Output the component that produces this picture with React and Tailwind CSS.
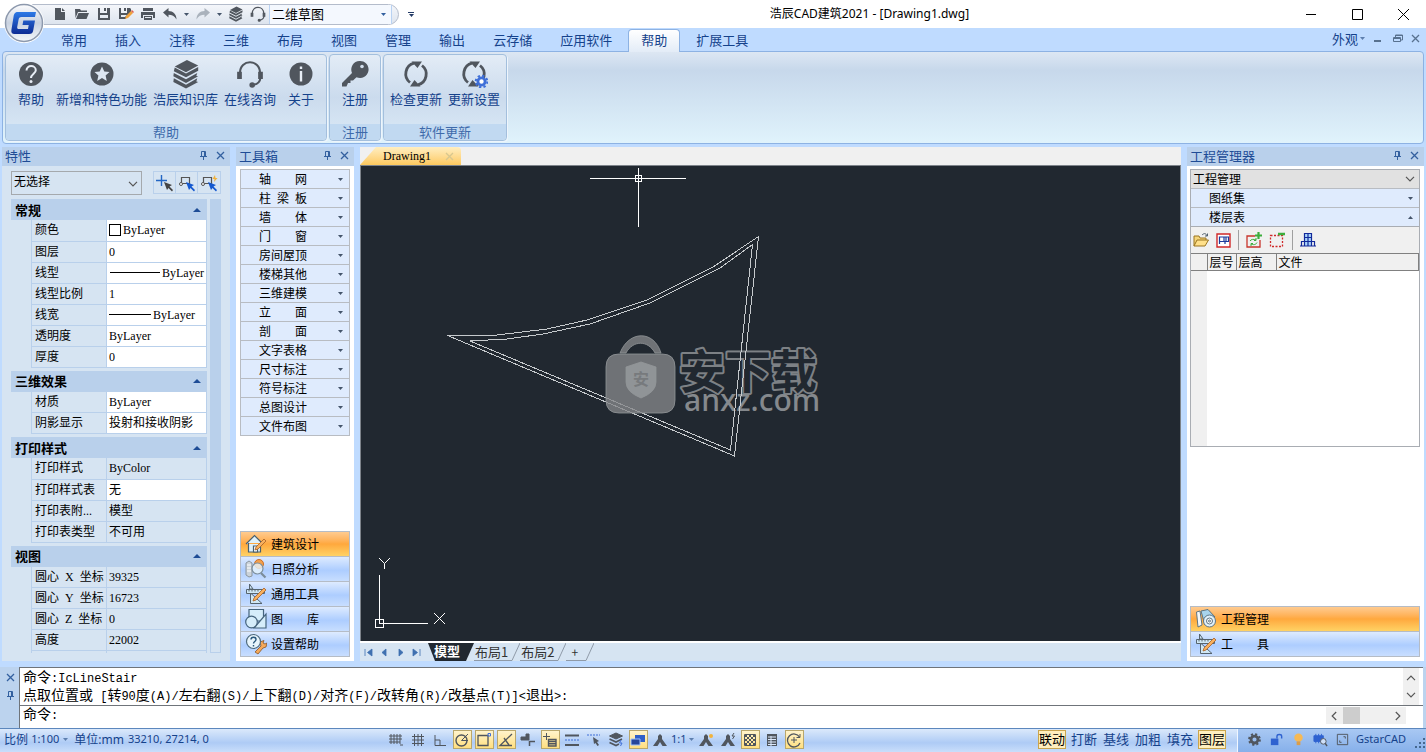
import React, { useState } from 'react';

const tabs = ['常用', '插入', '注释', '三维', '布局', '视图', '管理', '输出', '云存储', '应用软件', '帮助', '扩展工具'];

const propertyGroups = [
    {
        title: '常规',
        rows: [
            { name: '颜色', value: 'ByLayer', editable: true, mark: 'swatch' },
            { name: '图层', value: '0', editable: true },
            { name: '线型', value: 'ByLayer', editable: true, mark: 'longLine' },
            { name: '线型比例', value: '1', editable: true },
            { name: '线宽', value: 'ByLayer', editable: true, mark: 'shortLine' },
            { name: '透明度', value: 'ByLayer', editable: true },
            { name: '厚度', value: '0', editable: true },
        ],
    },
    {
        title: '三维效果',
        rows: [
            { name: '材质', value: 'ByLayer', editable: true },
            { name: '阴影显示', value: '投射和接收阴影', editable: true },
        ],
    },
    {
        title: '打印样式',
        rows: [
            { name: '打印样式', value: 'ByColor' },
            { name: '打印样式表', value: '无', editable: true },
            { name: '打印表附...', value: '模型' },
            { name: '打印表类型', value: '不可用' },
        ],
    },
    {
        title: '视图',
        rows: [
            { name: '圆心\u2002X\u2002坐标', value: '39325' },
            { name: '圆心\u2002Y\u2002坐标', value: '16723' },
            { name: '圆心\u2002Z\u2002坐标', value: '0' },
            { name: '高度', value: '22002' },
            { name: '宽度', value: '37952' },
        ],
    },
];

const toolItems = [
    '轴\u3000\u3000网', '柱\u2002梁\u2002板', '墙\u3000\u3000体', '门\u3000\u3000窗', '房间屋顶', '楼梯其他', '三维建模',
    '立\u3000\u3000面', '剖\u3000\u3000面', '文字表格', '尺寸标注', '符号标注', '总图设计', '文件布图',
];

const Caret = ({ up, className = 'text-[#44546a]' }) => (
    <svg width="5" height="3" viewBox="0 0 5 3" className={`shrink-0 ${className}`} fill="currentColor">
        <path d={up ? 'M0 3L2.5 0L5 3Z' : 'M0 0H5L2.5 3Z'} />
    </svg>
);

const Chevron = ({ className = '' }) => (
    <svg width="10" height="6" viewBox="0 0 10 6" className={className} fill="none" stroke="#555" strokeWidth="1.2">
        <path d="M1 .8L5 4.8L9 .8" />
    </svg>
);

/* ---------- icons ---------- */

const Gray = ({ size = 16, children }) => (
    <svg width={size} height={size} viewBox="0 0 16 16" fill="#50565e" className="shrink-0">{children}</svg>
);

const IconNew = () => <Gray><path d="M3 2H9V6H13V14H3Z" /><path d="M10 2L13 5H10Z" /></Gray>;
const IconOpen = () => <Gray><path d="M1 3H6L7 4.5H13V6H4L1.5 12Z" /><path d="M4.5 7H15L12.5 13H2Z" /></Gray>;
const IconSave = () => (
    <Gray><path d="M2 2H4V7H11V2H14V14H2ZM4 9V12H12V9Z" fillRule="evenodd" /><path d="M8 2H10V5H8Z" /></Gray>
);
const IconSaveAs = () => (
    <Gray>
        <path d="M1 2H3V7H9V2H12L13 3V6L8 11V13H1ZM3 9V11H7L9 9Z" fillRule="evenodd" /><path d="M6 2H8V5H6Z" />
        <path d="M7 13L8 10L13 5L15 7L10 12Z" fill="#f0a23c" /><path d="M13 5L15 7L16 6L14 4Z" fill="#e0604f" />
    </Gray>
);
const IconPrint = () => (
    <Gray><path d="M3 2H13V5H3ZM1 6H15V12H13V9H3V12H1Z" /><path d="M4 10H12V14H4ZM5 11V12H11V11Z" fillRule="evenodd" /></Gray>
);
const IconUndo = ({ faded }) => (
    <svg width="16" height="16" viewBox="0 0 16 16" className={faded ? 'scale-x-[-1]' : ''}>
        <path d="M1 6.5L6.5 2V5C11 5 14.5 8 14.5 13.5C12.5 10 10 8.7 6.5 8.7V11.5Z" fill={faded ? '#aab2bc' : '#50565e'} />
    </svg>
);
const IconBooks = ({ size = 16 }) => (
    <svg width={size} height={size} viewBox="0 0 32 32" fill="#50565e">
        <path d="M17 1L29 7L16 14L4 8Z" />
        <path d="M4 9L3 13L16 19.500L29 12.500V8.500L16 15.500Z" />
        <path d="M3 15L2.500 18.500L16 25.500L29 18.500L27 18L28 15L16 21.500Z" />
        <path d="M3 20.500L2.500 24.500L16 31.500L29 24.500L27 24L28 20.500L16 27.500Z" />
    </svg>
);
const IconHeadset = ({ size = 16 }) => (
    <svg width={size} height={size} viewBox="0 0 32 32" fill="none" stroke="#50565e" strokeWidth="2.400">
        <path d="M4.500 15C4.500 -1.500 27.500 -1.500 27.500 15M28 20C27.500 25 24 28 19 28.500" />
        <path d="M2.500 14.500H5.500V20.500H2.500ZM26.500 14.500H29.500V20.500H26.500Z" fill="#50565e" />
        <circle cx="18.500" cy="28.500" r="2" fill="#50565e" />
    </svg>
);
const IconHelp = () => (
    <svg width="26" height="26" viewBox="0 0 26 26">
        <circle cx="13" cy="13" r="12" fill="#50565e" />
        <path d="M8.500 9.500C8.500 3.500 17.800 3.800 17.800 9.300C17.800 12.500 13 13 13 17" fill="none" stroke="#e8eef6" strokeWidth="2" />
        <circle cx="13" cy="20.500" r="1.500" fill="#e8eef6" />
    </svg>
);
const IconStar = () => (
    <svg width="26" height="26" viewBox="0 0 26 26">
        <circle cx="13" cy="13" r="11.500" fill="#50565e" />
        <path d="M13 5.500L15.300 10.500L20.500 11L16.600 14.500L17.800 20L13 17L8.200 20L9.400 14.500L5.500 11L10.700 10.500Z" fill="#dde6f1" />
    </svg>
);
const IconInfo = () => (
    <svg width="26" height="26" viewBox="0 0 26 26">
        <circle cx="13" cy="13" r="11.500" fill="#50565e" />
        <path d="M11.800 10H14.200V20.500H11.800ZM11.800 5.500H14.200V8H11.800Z" fill="#e8eef6" />
    </svg>
);
const IconKey = () => (
    <svg width="28" height="28" viewBox="0 0 28 28">
        <path d="M18.500 1A8.500 8.500 0 1 1 15.500 17.200L12 20.500H9.500V23H7L5.500 26.500H1V23L11 13A8.500 8.500 0 0 1 18.500 1Z" fill="#50565e" />
        <circle cx="21" cy="6.500" r="1.800" fill="#d3dfed" />
    </svg>
);
const IconRefresh = ({ gear }) => (
    <svg width="28" height="28" viewBox="0 0 28 28" fill="none" stroke="#50565e" strokeWidth="2.800">
        <path d="M8 22.500A11 11 0 0 1 12 3.200M20 5.500A11 11 0 0 1 16 24.800" />
        <path d="M9.500 1.500H20L15.500 8ZM18.500 26.500H8L12.500 20Z" fill="#50565e" stroke="none" />
        {gear && (
            <g stroke="#3f6fd8">
                <circle cx="21.500" cy="21.500" r="3.600" fill="#fff" strokeWidth="2.800" />
                <circle cx="21.500" cy="21.500" r="5.800" strokeWidth="2" strokeDasharray="2.300 2.250" />
            </g>
        )}
    </svg>
);
const IconPin = () => (
    <svg width="9" height="9" viewBox="0 0 9 9" fill="none" stroke="#33609f"><path d="M2.500 .5H6.500V5M2.500 .5V5M5.500 .5V5M1 5.500H8M4.500 5.500V9" /></svg>
);
const IconClose = ({ color = '#33609f' }) => (
    <svg width="9" height="9" viewBox="0 0 9 9" fill="none" stroke={color} strokeWidth="1.300"><path d="M1 1L8 8M8 1L1 8" /></svg>
);

const pointer = 'M0 0L8 3L5.500 4.500L9 8L8 9.500L4.500 6L3 8Z';
const IconPick = ({ kind }) => (
    <svg width="18" height="18" viewBox="0 0 18 18" fill="none">
        {kind === 'add'
            ? <path d="M5.500 1V12M0 6.500H11" stroke="#2366c4" strokeWidth="1.400" />
            : <path d="M3.500 3.500H11.500V9.500H3.500Z" stroke="#555" strokeWidth="1.200" />}
        {kind !== 'add' && <circle cx="3" cy="10" r="1.500" fill="#fff" stroke="#555" />}
        {kind === 'quick' && <path d="M15 1L12.500 5H14.500L14 8L17.500 4H15.500Z" fill="#f2b33c" />}
        <path d={pointer} transform="translate(8 8)" fill={kind === 'add' ? '#444' : '#1458cf'} />
    </svg>
);

const IconHouse = () => (
    <svg width="22" height="22" viewBox="0 0 22 22" fill="#dff1fb" stroke="#48606f" strokeWidth="1.200">
        <path d="M3.500 10V19H15.500V10M1 11L9.500 2.500L18 11" /><path d="M8.500 13H12.500V19H8.500Z" fill="#fff" />
        <path d="M10 17L11 14L19 6L21 8L13 16Z" fill="#f8b05e" stroke="#a86124" strokeWidth=".8" />
    </svg>
);
const IconSun = () => (
    <svg width="22" height="22" viewBox="0 0 22 22" fill="none">
        <path d="M1 5L4 3L7 5V18L4 19L1 17Z" fill="#cbd3da" stroke="#8c969e" />
        <path d="M2 7H6M2 10H6M2 13H6" stroke="#fff" />
        <circle cx="14" cy="6" r="4.500" fill="#f4a04c" stroke="#cf6f23" />
        <circle cx="12.500" cy="10.500" r="5.500" fill="#e6f4fb" fillOpacity=".8" stroke="#7b8d9a" strokeWidth="1.200" />
        <path d="M16 15L20.500 19.500" stroke="#7b8d9a" strokeWidth="2.200" />
    </svg>
);
const IconRuler = () => (
    <svg width="22" height="22" viewBox="0 0 22 22" fill="#cfe7f5" stroke="#56646f">
        <path d="M4.500 1V6H8ZM5.500 10V20.500H17Z" /><path d="M1.500 6.500H19.500V10.500H1.500ZM4 6.500V8.500M7 6.500V8.500M10 6.500V8.500M13 6.500V8.500" />
        <path d="M8 18L9 15L19 5L21 7L11 17Z" fill="#f8b05e" stroke="#a86124" strokeWidth=".8" />
    </svg>
);
const IconShapes = () => (
    <svg width="22" height="22" viewBox="0 0 22 22" fill="#d5edfa" stroke="#45647d" strokeWidth="1.200">
        <path d="M4 1.500H18.500V13H4Z" /><path d="M21 6V20H9Z" /><circle cx="6.500" cy="14" r="5.800" />
    </svg>
);
const IconWrenchHelp = () => (
    <svg width="22" height="22" viewBox="0 0 22 22">
        <path d="M10 19L16 13L15 9L19 7.500L18 10L20 11L22 10L21 14L18 15L13 21Z" fill="#f5a95a" stroke="#8a5624" strokeWidth=".8" />
        <circle cx="8.500" cy="8.500" r="7" fill="#e8f5fc" stroke="#4f6b7e" strokeWidth="1.200" />
        <path d="M6 6.500C6 3.500 11 3.500 11 6.500C11 8.500 8.500 8.500 8.500 10.500M8.500 12V13.500" fill="none" stroke="#27567b" strokeWidth="1.400" />
    </svg>
);
const IconProject = () => (
    <svg width="22" height="22" viewBox="0 0 22 22" fill="#dff0fa" stroke="#5d7482">
        <path d="M1.500 4L5 3L7 17L3 19Z" fill="#f4f8fa" /><path d="M6 3L13 1.500L20 9L10 17Z" fill="#a8d4ec" />
        <circle cx="14.500" cy="13" r="6" /><circle cx="14.500" cy="13" r="3" fill="#fff" /><circle cx="14.500" cy="13" r="1" />
    </svg>
);

const Logo = () => (
    <svg width="40" height="40" viewBox="0 0 40 40">
        <defs>
            <linearGradient id="ball" x2="0" y2="1">
                <stop offset="0" stopColor="#fdfdfe" /><stop offset=".5" stopColor="#c9d2e0" /><stop offset="1" stopColor="#f3f7fb" />
            </linearGradient>
            <linearGradient id="blueG" x2="0" y2="1">
                <stop offset="0" stopColor="#2d79e6" /><stop offset="1" stopColor="#0c2b94" />
            </linearGradient>
        </defs>
        <circle cx="20" cy="20" r="18.500" fill="url(#ball)" stroke="#8d99ad" strokeWidth="1.500" />
        <path d="M14 9H32L31 14H17.500C15.500 14 14.800 15 14.500 17L13.200 24C13 25.500 13.500 26 15 26H24L24.700 22H18.500L19.300 17.500H31L29.300 27C28.800 30 27.500 31 25 31H10.500C8 31 7 29.500 7.400 27L9.500 14C10 10.500 11 9 14 9Z" fill="url(#blueG)" />
    </svg>
);

/* ---------- title bar and ribbon ---------- */

const QatButton = ({ label, children }) => (
    <button type="button" aria-label={label} className="flex w-[22px] items-center justify-center">{children}</button>
);

const TitleBar = () => (
    <header className="flex h-7 shrink-0 items-center bg-white">
        <div className="ml-8 flex h-[21px] items-stretch rounded-r-full border border-[#b4bccb] bg-linear-to-b from-[#f4f6fa] to-[#dde4ee] pl-4 pr-1.5">
            <QatButton label="新建"><IconNew /></QatButton>
            <QatButton label="打开"><IconOpen /></QatButton>
            <QatButton label="保存"><IconSave /></QatButton>
            <QatButton label="另存为"><IconSaveAs /></QatButton>
            <QatButton label="打印"><IconPrint /></QatButton>
            <QatButton label="放弃"><IconUndo /></QatButton>
            <button type="button" aria-label="放弃列表" className="flex w-[11px] items-center justify-center"><Caret /></button>
            <QatButton label="重做"><IconUndo faded /></QatButton>
            <button type="button" aria-label="重做列表" className="flex w-[11px] items-center justify-center"><Caret /></button>
            <QatButton label="知识库"><IconBooks /></QatButton>
            <QatButton label="咨询"><IconHeadset /></QatButton>
            <div className="relative">
                <select aria-label="工作空间" className="block h-[19px] w-[123px] appearance-none border-x border-[#b9d2f2] bg-[#f4f8fe] px-0.5 pb-0.5 text-[13px] leading-[17px] text-black outline-none">
                    <option>二维草图</option>
                </select>
                <Caret className="pointer-events-none absolute right-1.5 top-2 text-[#33609f]" />
            </div>
        </div>
        <button type="button" aria-label="自定义" className="ml-2 flex w-2 flex-col items-center gap-px">
            <span className="h-px w-1.5 bg-[#223a66]" />
            <Caret className="text-[#223a66]" />
        </button>
        <h1 className="flex-1 pl-9 text-center font-['Noto_Sans','Noto_Sans_CJK_SC',sans-serif] text-xs text-black">浩辰CAD建筑2021 - [Drawing1.dwg]</h1>
        <div className="flex self-stretch">
            {['M0 5.500H10', 'M.5 .5H10.500V10.500H.5Z', 'M0 0L11 11M11 0L0 11'].map((d, i) => (
                <button key={d} type="button" aria-label={['最小化', '最大化', '关闭'][i]} className="flex w-[46px] items-center justify-center">
                    <svg width="11" height="11" viewBox="0 0 11 11" fill="none" stroke="#000"><path d={d} /></svg>
                </button>
            ))}
        </div>
    </header>
);

const TabRow = ({ active, onSelect }) => (
    <nav className="flex h-[23px] shrink-0 items-stretch bg-[#bfdbff] pl-[47px] text-[13px] text-[#15428b]">
        {tabs.map(tab => (
            <button
                key={tab}
                type="button"
                onClick={() => onSelect(tab)}
                className={tab === active
                    ? 'z-10 mx-0.5 mt-px -mb-px rounded-t border border-b-0 border-[#8db2e3] bg-linear-to-b from-white to-[#e3ecf7] px-3 pb-0.5'
                    : 'px-3.5'}
            >
                {tab}
            </button>
        ))}
        <div className="ml-auto flex items-center pb-0.5 pr-1.5">
            <button type="button" className="flex items-center gap-0.5">外观 <Caret className="text-[#5d7fae]" /></button>
            <button type="button" aria-label="最小化文档" className="ml-2 flex w-5 items-center">
                <svg width="9" height="9" viewBox="0 0 9 9"><path d="M1 7H8" stroke="#58718f" strokeWidth="2" /></svg>
            </button>
            <button type="button" aria-label="还原文档" className="flex w-[18px] items-center">
                <svg width="10" height="9" viewBox="0 0 10 9" fill="none" stroke="#58718f"><path d="M2.500 3V1H9.500V6H8M.5 3.500H7.500V7.500H.5ZM.5 4.500H7.500M2.500 1.500H9.500" /></svg>
            </button>
            <button type="button" aria-label="关闭文档"><IconClose color="#58718f" /></button>
        </div>
    </nav>
);

const RibbonGroup = ({ title, items }) => (
    <section className="flex flex-col rounded border border-[#a3bfdd] bg-linear-to-b from-[#e3ecf6] via-[#cbdbed] to-[#dbeaf7] shadow-[1px_1px_0_#eef5fc]">
        <div className="flex flex-1 items-start px-[3px] pt-1">
            {items.map(({ label, icon }) => (
                <button key={label} type="button" className="flex min-w-11 flex-col items-center px-[3px] text-[13px] leading-5 text-[#15428b]">
                    <span className="flex h-[30px] items-center">{icon}</span>
                    <span>{label}</span>
                </button>
            ))}
        </div>
        <h2 className="rounded-b bg-[#c1d9f1] text-center text-[13px] leading-4 text-[#3e6aaa]">{title}</h2>
    </section>
);

const Ribbon = () => (
    <div className="shrink-0 bg-[#bfdbff] px-0.5 pb-[3px]">
        <div className="flex h-[93px] gap-0.5 rounded border border-[#8db2e3] bg-linear-to-b from-[#dde7f3] from-0% via-[#c7d8eb] via-20% to-[#e0f3fc] px-0.5 py-0.5">
            <RibbonGroup
                title="帮助"
                items={[
                    { label: '帮助', icon: <IconHelp /> },
                    { label: '新增和特色功能', icon: <IconStar /> },
                    { label: '浩辰知识库', icon: <IconBooks size={30} /> },
                    { label: '在线咨询', icon: <IconHeadset size={28} /> },
                    { label: '关于', icon: <IconInfo /> },
                ]}
            />
            <RibbonGroup title="注册" items={[{ label: '注册', icon: <IconKey /> }]} />
            <RibbonGroup
                title="软件更新"
                items={[
                    { label: '检查更新', icon: <IconRefresh /> },
                    { label: '更新设置', icon: <IconRefresh gear /> },
                ]}
            />
        </div>
    </div>
);

/* ---------- side panels ---------- */

const PanelHeader = ({ title }) => (
    <div className="flex h-[19px] shrink-0 items-center bg-[#b9d0eb] px-[3px] pb-0.5 text-[13px] leading-4 text-[#1e4c96]">
        <h2 className="flex-1">{title}</h2>
        <button type="button" aria-label="固定" className="mr-2"><IconPin /></button>
        <button type="button" aria-label="关闭" className="mr-0.5"><IconClose /></button>
    </div>
);

const PropertyValue = ({ row }) => (
    <span className="flex items-center whitespace-nowrap">
        {row.mark === 'swatch' && <span className="mr-0.5 size-3 border border-black bg-white" />}
        {row.mark === 'longLine' && <span className="mr-0.5 ml-px h-px w-[50px] shrink-0 bg-black" />}
        {row.mark === 'shortLine' && <span className="mr-0.5 h-px w-[42px] shrink-0 bg-black" />}
        {row.value}
    </span>
);

const PropertyGroup = ({ group }) => {
    const [open, setOpen] = useState(true);

    return (
        <div className="mb-[3px]">
            <button
                type="button"
                onClick={() => setOpen(!open)}
                className="flex h-[21px] w-full items-center justify-between bg-[#b9d0eb] pl-1 pr-1.5 text-[13px] font-bold text-black"
            >
                {group.title}
                <svg width="8" height="4" viewBox="0 0 8 4" fill="#1e4c96"><path d="M0 4L4 0L8 4Z" /></svg>
            </button>
            {open && (
                <table className="ml-5 w-[176px] table-fixed border-collapse font-['Liberation_Serif','Noto_Sans_CJK_SC',serif] text-xs leading-4 text-black">
                    <tbody>
                        {group.rows.map(row => (
                            <tr key={row.name} className="h-[21px]">
                                <th scope="row" className="w-[75px] whitespace-nowrap border-b border-l border-[#b9d0eb] p-0 pl-[3px] text-left font-normal">{row.name}</th>
                                <td className={`border border-t-0 border-[#b9d0eb] p-0 pl-0.5 ${row.editable ? 'bg-white' : ''}`}>
                                    <PropertyValue row={row} />
                                </td>
                            </tr>
                        ))}
                    </tbody>
                </table>
            )}
        </div>
    );
};

const PropertiesPanel = () => (
    <aside className="flex w-[228px] shrink-0 flex-col bg-[#d6e4f2]">
        <PanelHeader title="特性" />
        <div className="flex items-start justify-between pb-1 pl-[9px] pr-[9px] pt-[5px]">
            <div className="relative">
                <select aria-label="选择对象" className="block h-6 w-[131px] appearance-none border border-[#a5a9ad] bg-[#d6e4f2] px-0.5 pb-1 text-xs text-black outline-none">
                    <option>无选择</option>
                </select>
                <Chevron className="pointer-events-none absolute right-1 top-2.5" />
            </div>
            <div className="flex border border-[#b9d0eb]">
                {['add', 'select', 'quick'].map(kind => (
                    <button key={kind} type="button" aria-label={kind} className="flex h-[21px] w-[22px] items-center justify-center border-r border-[#b9d0eb] last:border-r-0">
                        <IconPick kind={kind} />
                    </button>
                ))}
            </div>
        </div>
        <div className="mb-2 flex min-h-0 flex-1 basis-0 gap-[3px] overflow-hidden pl-[9px] pr-[9px]">
            <div className="min-h-0 flex-1 overflow-hidden">
                {propertyGroups.map(group => <PropertyGroup key={group.title} group={group} />)}
            </div>
            <div className="w-[11px] border border-[#b9d0eb]">
                <div className="h-[73%] bg-[#b9d0eb]" />
            </div>
        </div>
    </aside>
);

const NavButton = ({ icon, label, active }) => (
    <button
        type="button"
        className={`flex h-[25px] w-full items-center gap-1 border-b border-[#b5bcc6] pl-1 text-xs text-black last:h-6 last:border-b-0 ${active
            ? 'bg-linear-to-b from-[#ffcb8f] via-[#ffa83d] via-50% to-[#ffd264]'
            : 'bg-linear-to-b from-[#deebff] via-[#adcdff] via-55% to-[#c8deff]'}`}
    >
        {icon}
        {label}
    </button>
);

const Toolbox = () => (
    <aside className="flex w-[118px] shrink-0 flex-col bg-white">
        <PanelHeader title="工具箱" />
        <ul className="mx-1 mt-[3px] border border-b-0 border-[#b8bcc2]">
            {toolItems.map(item => (
                <li key={item} className="border-b border-[#b8bcc2]">
                    <button type="button" className="flex h-[18px] w-full items-center justify-between bg-[#dfebfd] pl-[18px] pr-1.5 text-xs leading-[18px] text-black">
                        <span className="whitespace-pre">{item}</span>
                        <Caret />
                    </button>
                </li>
            ))}
        </ul>
        <div className="mx-1 mb-1 mt-auto border border-[#b5bcc6]">
            <NavButton icon={<IconHouse />} label="建筑设计" active />
            <NavButton icon={<IconSun />} label="日照分析" />
            <NavButton icon={<IconRuler />} label="通用工具" />
            <NavButton icon={<IconShapes />} label={'图\u3000\u3000库'} />
            <NavButton icon={<IconWrenchHelp />} label="设置帮助" />
        </div>
    </aside>
);

const ProjectToolbar = () => (
    <div className="flex h-[26px] items-center gap-[7px] bg-[#f0f0f0] px-0.5">
        <button type="button" aria-label="打开工程">
            <svg width="16" height="16" viewBox="0 0 16 16"><path d="M1 14V4H6L7 6H13V8" fill="#f5d57a" stroke="#9a7520" /><path d="M1 14L4 8H15.500L12 14Z" fill="#ffe08a" stroke="#9a7520" /><path d="M9 3C11 1 13 1 14 4M12 4H14.500V1.500" fill="none" stroke="#51606e" /></svg>
        </button>
        <button type="button" aria-label="图纸">
            <svg width="15" height="15" viewBox="0 0 15 15" fill="none"><path d="M1 1H14V14H1Z" fill="#fff" stroke="#d02828" strokeWidth="1.400" /><path d="M3.500 11V4H12.500V8.500H9V11M8 4V8.500H4M10 4V8" stroke="#1c3b9c" strokeWidth="1.200" /></svg>
        </button>
        <span className="h-5 w-px bg-[#a0a0a0]" />
        <button type="button" aria-label="添加楼层">
            <svg width="16" height="16" viewBox="0 0 16 16" fill="none"><path d="M9 4H1V15H14V8" stroke="#c8352b" strokeWidth="1.300" /><path d="M12.500 0V7M9 3.500H16" stroke="#3cae3c" strokeWidth="2.200" /><path d="M4 9C5 7 8 7 10 8M10 6V8.500H8M11 10.500C10 13 7 13 5 12M5 14V11.500H7" stroke="#3cae3c" /></svg>
        </button>
        <button type="button" aria-label="删除楼层">
            <svg width="16" height="16" viewBox="0 0 16 16" fill="none"><path d="M1.500 3.500H13.500V14.500H1.500Z" stroke="#d02828" strokeWidth="1.300" strokeDasharray="2 1.500" /><path d="M9 2H16" stroke="#3cae3c" strokeWidth="2.500" /></svg>
        </button>
        <span className="h-5 w-px bg-[#a0a0a0]" />
        <button type="button" aria-label="三维组合">
            <svg width="16" height="16" viewBox="0 0 16 16" fill="none"><path d="M4.500 14V1.500H11.500V14" fill="#a9d4fb" /><path d="M4.500 14V1.500H11.500V14M8 1.500V14M4.500 5.500H11.500M1.500 14V9.500H14.500V14M0 14H16" stroke="#12299a" strokeWidth="1.200" /></svg>
        </button>
    </div>
);

const ProjectPanel = () => (
    <aside className="flex w-[237px] shrink-0 flex-col bg-white">
        <PanelHeader title="工程管理器" />
        <div className="mx-[3px] mr-1 mt-[3px] flex flex-col border border-[#a9adb3] text-xs text-black">
            <div className="relative border-b border-[#b8bcc2]">
                <select aria-label="工程" className="block h-[18px] w-full appearance-none bg-[#e1e1e1] px-0.5 text-xs leading-[18px] text-black outline-none">
                    <option>工程管理</option>
                </select>
                <Chevron className="pointer-events-none absolute right-1 top-1.5" />
            </div>
            <button type="button" className="flex h-[19px] items-center justify-between border-b border-[#b8bcc2] bg-[#dfebfd] pl-[18px] pr-1.5 leading-[18px]">图纸集<Caret /></button>
            <button type="button" className="flex h-[19px] items-center justify-between border-b border-[#a9adb3] bg-[#dfebfd] pl-[18px] pr-1.5 leading-[18px]">楼层表<Caret up /></button>
            <ProjectToolbar />
            <div className="flex h-[193px] flex-col border-t border-[#808080] bg-white">
                <table className="w-full table-fixed border-collapse">
                    <thead>
                        <tr className="h-4 border-b border-[#808080] bg-[#f0f0f0] text-left leading-4">
                            <td className="w-4 border-r border-[#808080] p-0" />
                            <th className="w-[29px] whitespace-nowrap border-r border-[#808080] p-0 pl-0.5 font-normal">层号</th>
                            <th className="w-10 border-r border-[#808080] p-0 pl-0.5 font-normal">层高</th>
                            <th className="border-r border-[#808080] p-0 pl-0.5 font-normal">文件</th>
                        </tr>
                    </thead>
                </table>
                <div className="w-4 flex-1 bg-[#f0f0f0]" />
            </div>
        </div>
        <div className="mb-1 ml-[3px] mr-1 mt-auto border border-[#b5bcc6]">
            <NavButton icon={<IconProject />} label="工程管理" active />
            <NavButton icon={<IconRuler />} label={'工\u3000\u3000具'} />
        </div>
    </aside>
);

/* ---------- drawing area ---------- */

const Drawing = () => (
    <svg className="absolute inset-0 size-full" fill="none">
        <text x="318" y="222" fontSize="46" fontWeight="bold" fill="#212830" stroke="#7d8185" strokeWidth="4" strokeLinejoin="round" paintOrder="stroke">安下载</text>
        <text x="323" y="245" fontSize="30" fontWeight="500" fill="#85898d" className="font-['Noto_Sans',sans-serif]">anxz.com</text>
        <g stroke="#c6cacd" shapeRendering="crispEdges">
            <path d="M86.500 169.500H132L186 163L226 154L286 134L352 101L397.500 70.500L373.500 290Z" />
            <path d="M109 175L146 173L182 168L229 158L289 137L359 102L391.500 78.500L369.500 284Z" />
        </g>
        <g fill="#85888b" fillOpacity=".78" stroke="#929699" strokeOpacity=".8">
            <path d="M258 188H301Q314 188 314 201V234Q314 247 301 247H258Q245 247 245 234V201Q245 188 258 188Z" />
            <path d="M259 187C268 164 293 164 300 187H294C287 174 272 174 265 187Z" />
            <path d="M280 196L295 201V216Q295 226 280 232Q265 226 265 216V201Z" fill="#9a9da0" />
        </g>
        <text x="272" y="219" fontSize="16" fontWeight="bold" fill="#777a7d">安</text>
        <g shapeRendering="crispEdges" stroke="#fff">
            <path d="M229 12.500H325M277.500 2V61" />
            <path d="M274.500 9.500H280.500V15.500H274.500Z" />
        </g>
    </svg>
);

const UcsIcon = () => (
    <svg width="90" height="90" viewBox="0 0 90 90" fill="none" stroke="#fff" className="absolute bottom-0 left-0">
        <path d="M18.500 24V72.500H67M14.500 68.500H22.500V76.500H14.500Z" shapeRendering="crispEdges" />
        <path d="M18 7L23.500 12.500L29 7M23.500 12.500V18M73 62L84 73M84 62L73 73" />
    </svg>
);

const SheetTab = ({ label }) => (
    <button type="button" className="flex items-stretch text-[13px] leading-[17px] text-[#333]">
        <span className="border-b border-[#8f9aa8] px-px">{label}</span>
        <svg width="11" height="18" viewBox="0 0 11 18" fill="none" stroke="#8f9aa8"><path d="M11 0L3 17.500H0" /></svg>
    </button>
);

const Workspace = () => (
    <main className="flex min-w-0 flex-1 flex-col bg-[#d6e4f2]">
        <div className="flex h-[19px] shrink-0 items-stretch border-b border-[#7d838a] bg-[#f0f0f0]">
            <button
                type="button"
                className="flex w-[101px] items-center rounded-tr bg-linear-to-b from-[#ffeec0] to-[#fdc95d] pl-[23px] font-['Liberation_Serif',serif] text-xs text-black [clip-path:polygon(0_100%,16px_0,100%_0,100%_100%)]"
            >
                Drawing1
                <span className="ml-3.5"><IconClose color="#d8c78f" /></span>
            </button>
        </div>
        <div className="relative flex-1 overflow-hidden border-l border-r border-[#7d838a] bg-[#212830]">
            <Drawing />
            <UcsIcon />
        </div>
        <div className="flex h-5 shrink-0 items-stretch border-t-2 border-white pl-1">
            {['M1 1V8M8 1V8L3.500 4.500Z', 'M6 1V8L2 4.500Z', 'M3 1V8L7 4.500Z', 'M8 1V8M1 1V8L5.500 4.500Z'].map((d, i) => (
                <button key={d} type="button" aria-label={['首页', '上一页', '下一页', '末页'][i]} className="flex w-4 items-center">
                    <svg width="9" height="9" viewBox="0 0 9 9" fill="#3f70b0" stroke="#3f70b0" strokeWidth=".8"><path d={d} /></svg>
                </button>
            ))}
            <button type="button" className="w-[46px] bg-[#212830] pb-0.5 pr-2 text-[13px] font-bold leading-4 text-white [clip-path:polygon(0_0,100%_0,38px_100%,7px_100%)]">模型</button>
            <SheetTab label="布局1" />
            <SheetTab label="布局2" />
            <SheetTab label={<span className="px-1 text-xs">+</span>} />
        </div>
    </main>
);

/* ---------- command line and status bar ---------- */

// latin runs are set smaller so that two of them are as wide as one hanzi
const CommandText = ({ children }) => (
    <span className="whitespace-pre font-['Liberation_Mono','Noto_Sans_CJK_SC',monospace] text-sm leading-[18px] text-black">
        {children.split(/([\x20-\x7e]+)/).map((part, i) => (
            i % 2 ? <span key={i} className="text-xs">{part}</span> : part
        ))}
    </span>
);

const CommandLine = () => (
    <div className="flex h-[61px] shrink-0 bg-[#bcd3ee] pl-1 pr-[3px]">
        <div className="flex w-[15px] shrink-0 flex-col gap-[9px] pl-0.5 pt-1.5">
            <button type="button" aria-label="关闭"><IconClose /></button>
            <button type="button" aria-label="固定"><IconPin /></button>
        </div>
        <div className="flex min-w-0 flex-1 flex-col border-l border-t border-[#6f747a] bg-white">
            <div className="flex h-[38px] border-b border-[#6f747a]">
                <div className="flex flex-1 flex-col pl-[3px] pt-px">
                    <CommandText>命令:IcLineStair</CommandText>
                    <CommandText>点取位置或 [转90度(A)/左右翻(S)/上下翻(D)/对齐(F)/改转角(R)/改基点(T)]&lt;退出&gt;:</CommandText>
                </div>
                <div className="mr-1 flex w-4 flex-col items-center justify-between bg-[#f0f0f0] py-[7px]">
                    <Chevron className="rotate-180" />
                    <Chevron />
                </div>
            </div>
            <div className="flex flex-1 items-start pl-[3px]">
                <label htmlFor="command" className="flex"><CommandText>命令:</CommandText></label>
                <input id="command" className="h-[18px] flex-1 font-['Liberation_Mono',monospace] text-xs outline-none" />
                <div className="mr-[17px] mt-px flex h-[17px] w-20 items-center bg-[#f0f0f0] px-[3px]">
                    <Chevron className="rotate-90" />
                    <span className="ml-1 h-full w-[17px] bg-[#cdcdcd]" />
                    <Chevron className="ml-auto -rotate-90" />
                </div>
            </div>
        </div>
    </div>
);

const person = 'M8 2L10 4V7L15 14H10.500L8 10L5.500 14H1L6 7V4Z';

const toggles = [
    { name: '捕捉', art: <path d="M3 2V12M6 2V12M9 2V12M12 2V12M1 4H14M1 7H14M1 10H12M12 13H15" /> },
    { name: '栅格', art: <path d="M4.500 2V14M8 2V14M11.500 2V14M2 4.500H14M2 8H14M2 11.500H14" /> },
    { name: '正交', art: <path d="M3 3V13.500H14M3 8H8V13" /> },
    { name: '极轴', on: true, art: <><circle cx="7.500" cy="8.500" r="5.500" strokeWidth="1.400" /><path d="M7.500 8.500H14M7.500 8.500L14 2" /></> },
    { name: '对象捕捉', on: true, art: <><path d="M2 3.500H12V13.500H2Z" strokeWidth="1.300" /><path d="M12 1.500H14.500V4H12Z" stroke="#3f6fd8" /></> },
    { name: '对象追踪', on: true, art: <path d="M14 2L2 13.500H14M6 6L11 13" strokeWidth="1.300" /> },
    { name: '动态坐标', art: <><path d="M6 2H9V8H1V5H6Z" fill="#50565e" /><path d="M9.500 14V9.500H15" strokeWidth="1.500" /></> },
    { name: '动态输入', on: true, art: <><path d="M4.500 1V8M1 4.500H8" /><path d="M6.500 7.500H14V14H6.500ZM7 9.500H14M7 11.800H14" strokeWidth="1.400" /></> },
    { name: '线宽', art: <><path d="M1 3.500H15M1 13H15" strokeWidth="2" /><path d="M1 8H15" stroke="#3f6fd8" strokeDasharray="2 1" /></> },
    { name: '选择循环', art: <><path d="M1 3H14" stroke="#3f6fd8" strokeDasharray="2 1" /><path d="M7 5L13 9L11 10L13 13L11.500 14L9.500 11L8 12Z" fill="#50565e" stroke="none" /></> },
    { name: '注释图层', art: <><path d="M8 1L14.500 4L8 7L1.500 4Z" fill="#50565e" /><path d="M1.500 7L8 10L14 7M1.500 10.500L8 13.500L11 12" strokeWidth="1.600" /><path d="M13 8L11.500 11H14L12.500 14" stroke="#3f6fd8" /></> },
    { name: '快捷特性', on: true, art: <><path d="M5 3H15V10H5Z" fill="#2f5fc8" stroke="none" /><path d="M1 7H10V13H1Z" fill="#27469a" stroke="#9cc0ff" /></> },
    { name: '注释比例', art: <path d={person} fill="#50565e" stroke="none" /> },
];

const extraToggles = [
    { name: '注释可见', art: <><path d={person} fill="#50565e" stroke="none" /><circle cx="13" cy="4" r="2" fill="#f2b33c" stroke="none" /></> },
    { name: '自动缩放', art: <><path d={person} fill="#50565e" stroke="none" /><path d="M14 1L12 4H14.500L12.500 7" /></> },
    { name: '透明', on: true, art: <><path d="M2.500 2.500H13.500V13.500H2.500Z" /><path d="M3 3H5V5H3ZM7 3H9V5H7ZM11 3H13V5H11ZM5 5H7V7H5ZM9 5H11V7H9ZM3 7H5V9H3ZM7 7H9V9H7ZM11 7H13V9H11ZM5 9H7V11H5ZM9 9H11V11H9ZM3 11H5V13H3ZM7 11H9V13H7ZM11 11H13V13H11Z" fill="#50565e" stroke="none" /></> },
    { name: '列表', art: <><path d="M3 2H13V14H3Z" fill="#50565e" stroke="none" /><path d="M4 5H12M4 7.500H12M4 10H12M4 12.500H12M7 4V14" stroke="#dbe8fa" /></> },
    { name: '循环', on: true, art: <><path d="M13.500 5A6.500 6.500 0 1 0 14 11" strokeWidth="1.300" /><path d="M8 5V11M5 8H11M14 2V5.500H10.500" /></> },
];

const Toggle = ({ name, on, art }) => (
    <button type="button" aria-label={name} aria-pressed={!!on} className="flex w-[22px] items-center justify-center">
        <span className={`flex size-[19px] items-center justify-center ${on ? 'border border-[#b9a76c] bg-linear-to-b from-[#fff3cb] to-[#ffdf7e]' : ''}`}>
            <svg width="16" height="16" viewBox="0 0 16 16" fill="none" stroke="#50565e" className="shrink-0">{art}</svg>
        </span>
    </button>
);

const trayIcons = [
    <><circle cx="8" cy="8" r="3.700" stroke="#50565e" strokeWidth="3" /><circle cx="8" cy="8" r="5.800" stroke="#50565e" strokeWidth="2" strokeDasharray="2.300 2.250" /></>,
    <><path d="M2 7H10V14H2Z" fill="#2f62d0" /><path d="M8.500 7V4.500C8.500 2 13.500 2 13.500 4.500V7" stroke="#2f62d0" strokeWidth="1.500" /></>,
    <><circle cx="8" cy="6" r="4.500" fill="#f6b955" /><path d="M6 10H10V14H6Z" fill="#d99d4b" /></>,
    <><path d="M1 4H11V10H1ZM3 2V12M6 2V12M9 2V12" fill="#2f62d0" stroke="#2f62d0" /><circle cx="11" cy="10" r="3" fill="#cfe0f8" stroke="#50565e" /><path d="M13 12L15 15" stroke="#50565e" strokeWidth="1.500" /></>,
    <path d="M2.500 2.500H13.500V13.500H2.500ZM9 5H11V7M5 9V11H7" stroke="#50565e" />,
];

const StatusBar = () => (
    <footer className="flex h-6 shrink-0 items-stretch border-t border-[#5c87bd] bg-linear-to-b from-[#dbe9fb] via-[#aecbf5] via-60% to-[#c9defb] pb-0.5 font-['Noto_Sans','Noto_Sans_CJK_SC',sans-serif] text-[11px] text-[#15428b]">
        <div className="flex w-[27%] items-center pl-1">
            <span className="text-xs">比例&nbsp;</span>
            <button type="button" className="flex items-center gap-1">1:100 <Caret className="text-[#5d7fae]" /></button>
            <span className="ml-1.5 text-xs">单位:mm</span>
            <span className="ml-1">33210, 27214, 0</span>
        </div>
        {toggles.map(item => <Toggle key={item.name} {...item} />)}
        <button type="button" className="flex w-6 items-center gap-0.5">1:1 <Caret className="text-[#5d7fae]" /></button>
        {extraToggles.map(item => <Toggle key={item.name} {...item} />)}
        <div className="ml-auto mr-[11px] flex items-center gap-1 text-[13px]">
            {['联动', '打断', '基线', '加粗', '填充', '图层'].map((label, i) => (
                <button
                    key={label}
                    type="button"
                    className={`w-7 border text-center leading-[17px] ${i === 0 || i === 5 ? 'border-[#c9a54e] bg-[#ffefbf] text-black' : 'border-transparent'}`}
                >
                    {label}
                </button>
            ))}
        </div>
        <div className="-mb-0.5 flex items-center border-l border-[#f0f6ff] bg-linear-to-b from-[#a9c8f3] to-[#86b0ea] pb-0.5 pl-[5px]">
            {trayIcons.map((art, i) => (
                <button key={i} type="button" aria-label={['设置', '锁定', '隔离', '硬件加速', '全屏'][i]} className="flex w-[22px] justify-center">
                    <svg width="15" height="15" viewBox="0 0 16 16" fill="none">{art}</svg>
                </button>
            ))}
            <span className="ml-[3px] w-[58px]">GstarCAD</span>
            <svg width="12" height="12" viewBox="0 0 12 12" fill="#45688f" className="self-end"><path d="M9 0H11V2H9ZM5 4H7V6H5ZM9 4H11V6H9ZM1 8H3V10H1ZM5 8H7V10H5ZM9 8H11V10H9Z" /></svg>
        </div>
    </footer>
);

const App = () => {
    const [activeTab, setActiveTab] = useState('帮助');

    return (
        <div className="relative flex h-screen min-h-[700px] flex-col overflow-hidden bg-[#bfdbff] font-['Noto_Sans_CJK_SC',sans-serif]">
            <TitleBar />
            <button type="button" aria-label="应用程序菜单" className="absolute left-1 top-[3px] z-20 rounded-full bg-white"><Logo /></button>
            <TabRow active={activeTab} onSelect={setActiveTab} />
            <Ribbon />
            <div className="flex min-h-0 flex-1 gap-1.5 px-0.5 pb-1.5">
                <PropertiesPanel />
                <Toolbox />
                <Workspace />
                <ProjectPanel />
            </div>
            <CommandLine />
            <StatusBar />
        </div>
    );
};

export default App;
